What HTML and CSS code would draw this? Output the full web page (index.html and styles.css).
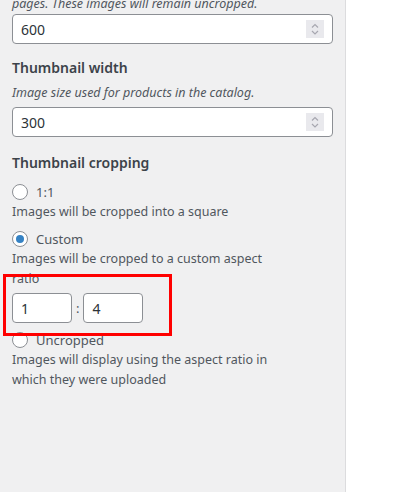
FILE: index.html
```html
<!DOCTYPE html>
<html lang="en">
<head>
  <meta charset="UTF-8">
  <title>Product images</title>
  <link rel="stylesheet" href="styles.css">
</head>
<body>
  <div class="panel">
    <p class="desc top-desc">pages. These images will remain uncropped.</p>
    <div class="field">
      <input type="text" value="600">
      <span class="spinner">
        <svg width="18" height="18" viewBox="0 0 18 18"><path d="M6 7.5 L9 4.5 L12 7.5 M6 11 L9 14 L12 11" fill="none" stroke="#a7a7b0" stroke-width="1.2"/></svg>
      </span>
    </div>

    <div class="control">
      <div class="control-title">Thumbnail width</div>
      <p class="desc">Image size used for products in the catalog.</p>
      <div class="field">
        <input type="text" value="300">
        <span class="spinner">
          <svg width="18" height="18" viewBox="0 0 18 18"><path d="M6 7.5 L9 4.5 L12 7.5 M6 11 L9 14 L12 11" fill="none" stroke="#a7a7b0" stroke-width="1.2"/></svg>
        </span>
      </div>
    </div>

    <div class="control cropping">
      <div class="control-title">Thumbnail cropping</div>

      <div class="option">
        <label class="radio-row"><span class="radio"></span>1:1</label>
        <p class="option-desc">Images will be cropped into a square</p>
      </div>

      <div class="option">
        <label class="radio-row"><span class="radio checked"></span>Custom</label>
        <p class="option-desc">Images will be cropped to a custom aspect ratio</p>
        <div class="ratio">
          <input type="text" value="1">
          <span class="colon">:</span>
          <input type="text" value="4">
        </div>
      </div>

      <div class="option">
        <label class="radio-row"><span class="radio"></span>Uncropped</label>
        <p class="option-desc">Images will display using the aspect ratio in which they were uploaded</p>
      </div>

      <div class="highlight-box"></div>
    </div>
  </div>
  <div class="preview"></div>
</body>
</html>
```

FILE: styles.css
```css
body {
  margin: 0;
  display: flex;
  height: 492px;
  overflow: hidden;
  background: #fff;
  font-family: "Noto Sans", sans-serif;
  font-size: 12.5px;
  color: #50575e;
}

/* customizer sidebar */
.panel {
  position: relative;
  width: 321px;
  padding: 0 12px;
  background: #f0f0f1;
  border-right: 1px solid #dcdcde;
  flex-shrink: 0;
}

.preview {
  flex: 1;
  background: #fff;
}

.desc {
  margin: 0;
  font-style: italic;
  line-height: 20px;
}

.top-desc {
  margin-top: -6px;
}

.control {
  margin-top: 12px;
}

.control-title {
  font-size: 14px;
  font-weight: 600;
  line-height: 24px;
  color: #3c434a;
  margin-bottom: 3px;
}

.control .desc {
  margin-bottom: 4px;
}

/* number input */
.field {
  display: flex;
  align-items: center;
  height: 28px;
  border: 1px solid #8c8f94;
  border-radius: 4px;
  background: #fff;
  padding: 0 8px;
}

.field input {
  flex: 1;
  border: 0;
  outline: 0;
  padding: 0;
  font: 14px "Noto Sans", sans-serif;
  color: #2c3338;
  background: transparent;
}

.spinner {
  display: flex;
  width: 18px;
  height: 18px;
  background: #e9e9ed;
}

/* radio options */
.cropping {
  margin-top: 14px;
}

.cropping .control-title {
  margin-bottom: 9px;
}

.option {
  margin-bottom: 9px;
}

.radio-row {
  display: flex;
  align-items: center;
  gap: 8px;
  height: 16px;
  line-height: 16px;
  font-size: 13px;
  color: #50575e;
}

.radio {
  width: 14px;
  height: 14px;
  border: 1px solid #8c8f94;
  border-radius: 50%;
  background: #fff;
  position: relative;
}

.radio.checked::after {
  content: "";
  position: absolute;
  left: 3px;
  top: 3px;
  width: 8px;
  height: 8px;
  border-radius: 50%;
  background: #3582c4;
}

.option-desc {
  margin: 2px 0 0;
  line-height: 20px;
  width: 262px;
}

.ratio {
  display: flex;
  align-items: center;
  gap: 4px;
  margin-top: 4px;
}

.ratio input {
  width: 42px;
  height: 28px;
  padding: 0 8px;
  border: 1px solid #8c8f94;
  border-radius: 4px;
  font: 14px "Noto Sans", sans-serif;
  color: #2c3338;
}

.colon {
  font-size: 13px;
}

/* red annotation drawn over the screenshot */
.highlight-box {
  position: absolute;
  left: 3px;
  top: 274px;
  width: 163px;
  height: 56px;
  border: 3px solid #f00;
}
```
